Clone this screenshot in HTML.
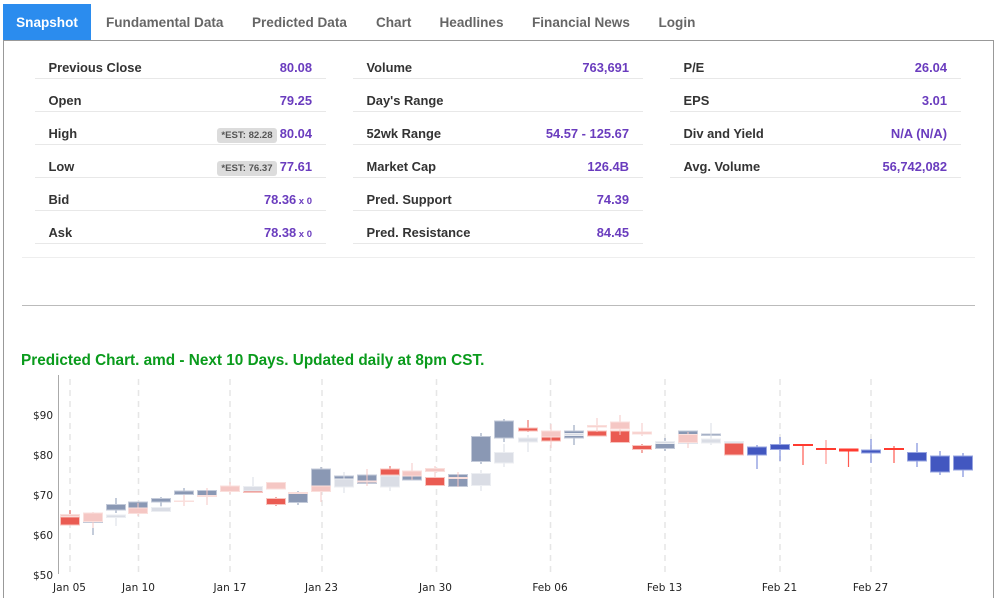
<!DOCTYPE html>
<html><head><meta charset="utf-8"><style>
html,body{margin:0;padding:0;background:#fff;width:998px;height:598px;overflow:hidden;font-family:"Liberation Sans",sans-serif}
#wrap{position:relative;width:998px;height:598px;overflow:hidden}
.tab{position:absolute;top:4px;height:36px;line-height:37px;font-size:13.55px;font-weight:bold;color:#666;white-space:nowrap}
#on{left:3px;width:88px;background:#2b8cee;color:#fff;text-align:center}
#panel{position:absolute;left:3px;top:40px;width:989px;height:558px;border:1px solid #999;border-bottom:0;box-sizing:content-box}
.row{position:absolute;height:33px;border-bottom:1px solid #e8e8e8;font-size:12.9px;font-weight:bold;color:#333;line-height:33px;box-sizing:border-box;white-space:nowrap}
.row b{position:absolute;left:13.5px;top:5px}
.row i{position:absolute;right:14px;top:5px;font-style:normal;color:#6a3cbe}
.row i small{font-size:9.5px;margin-left:-1px}
.est{position:absolute;right:49px;top:16px;width:60px;height:15px;line-height:15px;border-radius:3px;background:#dcdcdc;color:#555;font-size:9.6px;font-weight:bold;text-align:center}
.hr{position:absolute;left:22px;width:953px;height:1px}
h3{position:absolute;left:21px;top:352px;margin:0;font-size:15.33px;line-height:18px;color:#0a9b1c;white-space:nowrap}
svg{position:absolute;left:0;top:0}
text{font-family:"DejaVu Sans",sans-serif;font-size:10.5px;fill:#222}
.grid line{stroke:#e6e6e6;stroke-width:1.5;stroke-dasharray:6 5}
.s{fill:#8a98b4;stroke:#c3cad9}.s line,line.s{stroke:#8a98b4}
.r{fill:#ea5b52;stroke:#f8c4bf}line.r{stroke:#ea5b52}
.p{fill:#f5c7c4;stroke:#fadfdc}line.p{stroke:#f5c7c4}
.g{fill:#dadde5;stroke:#eceef2}line.g{stroke:#dadde5}
.b{fill:#4257c0;stroke:#97a4e0}line.b{stroke:#7f8fdb}
.t{fill:#ff3b30;stroke:none}line.t{stroke:#ff5a50}
</style></head><body><div id="wrap">
<div class="tab" id="on">Snapshot</div>
<div class="tab" style="left:106px">Fundamental Data</div>
<div class="tab" style="left:252px">Predicted Data</div>
<div class="tab" style="left:376px">Chart</div>
<div class="tab" style="left:439.5px">Headlines</div>
<div class="tab" style="left:532px">Financial News</div>
<div class="tab" style="left:658.5px">Login</div>
<div id="panel"></div>

<div class="row" style="left:35px;top:46px;width:291px"><b>Previous Close</b><i>80.08</i></div>
<div class="row" style="left:35px;top:79px;width:291px"><b>Open</b><i>79.25</i></div>
<div class="row" style="left:35px;top:112px;width:291px"><b>High</b><span class="est">*EST: 82.28</span><i>80.04</i></div>
<div class="row" style="left:35px;top:145px;width:291px"><b>Low</b><span class="est">*EST: 76.37</span><i>77.61</i></div>
<div class="row" style="left:35px;top:178px;width:291px"><b>Bid</b><i>78.36 <small>x 0</small></i></div>
<div class="row" style="left:35px;top:211px;width:291px"><b>Ask</b><i>78.38 <small>x 0</small></i></div>

<div class="row" style="left:353px;top:46px;width:290px"><b>Volume</b><i>763,691</i></div>
<div class="row" style="left:353px;top:79px;width:290px"><b>Day's Range</b></div>
<div class="row" style="left:353px;top:112px;width:290px"><b>52wk Range</b><i>54.57 - 125.67</i></div>
<div class="row" style="left:353px;top:145px;width:290px"><b>Market Cap</b><i>126.4B</i></div>
<div class="row" style="left:353px;top:178px;width:290px"><b>Pred. Support</b><i>74.39</i></div>
<div class="row" style="left:353px;top:211px;width:290px"><b>Pred. Resistance</b><i>84.45</i></div>

<div class="row" style="left:670px;top:46px;width:291px"><b>P/E</b><i>26.04</i></div>
<div class="row" style="left:670px;top:79px;width:291px"><b>EPS</b><i>3.01</i></div>
<div class="row" style="left:670px;top:112px;width:291px"><b>Div and Yield</b><i>N/A (N/A)</i></div>
<div class="row" style="left:670px;top:145px;width:291px"><b>Avg. Volume</b><i>56,742,082</i></div>

<div class="hr" style="top:257px;background:#eee"></div>
<div class="hr" style="top:305px;background:#bbb"></div>
<h3>Predicted Chart. amd - Next 10 Days. Updated daily at 8pm CST.</h3>

<svg width="998" height="598" viewBox="0 0 998 598">
<g class="grid">
<line x1="70" y1="379" x2="70" y2="575"/><line x1="138.5" y1="379" x2="138.5" y2="575"/><line x1="230" y1="379" x2="230" y2="575"/><line x1="322" y1="379" x2="322" y2="575"/><line x1="436.5" y1="379" x2="436.5" y2="575"/><line x1="550.5" y1="379" x2="550.5" y2="575"/><line x1="665" y1="379" x2="665" y2="575"/><line x1="780" y1="379" x2="780" y2="575"/><line x1="871" y1="379" x2="871" y2="575"/>
</g>
<line x1="58.5" y1="375" x2="58.5" y2="574" stroke="#aaa" stroke-width="1"/>
<text x="33" y="419">$90</text><text x="33" y="459">$80</text><text x="33" y="499">$70</text><text x="33" y="539">$60</text><text x="33" y="579">$50</text>
<g text-anchor="middle">
<text x="69.5" y="591">Jan 05</text><text x="138.5" y="591">Jan 10</text><text x="230" y="591">Jan 17</text><text x="321.5" y="591">Jan 23</text><text x="435.5" y="591">Jan 30</text><text x="550" y="591">Feb 06</text><text x="664.5" y="591">Feb 13</text><text x="779.5" y="591">Feb 21</text><text x="870.5" y="591">Feb 27</text>
</g>
<!-- dark layer wicks -->
<g stroke-width="1">
<line class="r" x1="70" y1="510" x2="70" y2="518"/>
<line class="s" x1="93" y1="522" x2="93" y2="535"/>
<line class="s" x1="116" y1="498" x2="116" y2="513"/>
<line class="s" x1="161" y1="497" x2="161" y2="506"/>
<line class="s" x1="184" y1="488" x2="184" y2="496"/>
<line class="r" x1="276" y1="497" x2="276" y2="506"/>
<line class="s" x1="298" y1="491" x2="298" y2="505"/>
<line class="s" x1="321" y1="467" x2="321" y2="486"/>
<line class="s" x1="344" y1="472" x2="344" y2="479"/>
<line class="s" x1="367" y1="472" x2="367" y2="486"/>
<line class="r" x1="390" y1="466" x2="390" y2="476"/>
<line class="s" x1="481" y1="433" x2="481" y2="464"/>
<line class="s" x1="504" y1="419" x2="504" y2="442"/>
<line class="r" x1="528" y1="420" x2="528" y2="432"/>
<line class="s" x1="574" y1="425" x2="574" y2="445"/>
<line class="r" x1="551" y1="436" x2="551" y2="442"/>
<line class="r" x1="597" y1="428" x2="597" y2="432"/>
<line class="r" x1="642" y1="444" x2="642" y2="453"/>
<line class="s" x1="665" y1="438" x2="665" y2="451"/>
<line class="s" x1="711" y1="423" x2="711" y2="436"/>
</g>
<!-- dark layer bodies -->
<rect class="r" x="60.5" y="517" width="19" height="8"/>
<rect class="s" x="83.5" y="521" width="19" height="1.5"/>
<rect class="s" x="106.5" y="504.5" width="19" height="5.5"/>
<rect class="s" x="128.5" y="502" width="19" height="6"/>
<rect class="s" x="151.5" y="498.5" width="19" height="3.5"/>
<rect class="s" x="174.5" y="491" width="19" height="3.5"/>
<rect class="s" x="197.5" y="490.5" width="19" height="5"/>
<rect class="r" x="243.5" y="491" width="19" height="1.5"/>
<rect class="r" x="266.5" y="498.5" width="19" height="6"/>
<rect class="s" x="288.5" y="493.5" width="19" height="9"/>
<rect class="s" x="311.5" y="469" width="19" height="17"/>
<rect class="s" x="334.5" y="476" width="19" height="3"/>
<rect class="s" x="357.5" y="475" width="19" height="8.5"/>
<rect class="r" x="380.5" y="469" width="19" height="6"/>
<rect class="s" x="402.5" y="476" width="19" height="4"/>
<rect class="r" x="425.5" y="477.5" width="19" height="8"/>
<rect class="s" x="448.5" y="474.5" width="19" height="12"/>
<rect class="s" x="471.5" y="436.5" width="19" height="25"/>
<rect class="s" x="494.5" y="421" width="19" height="17"/>
<rect class="r" x="518.5" y="428" width="19" height="3"/>
<rect class="r" x="541.5" y="437" width="19" height="4"/>
<rect class="s" x="564.5" y="431" width="19" height="7"/>
<rect class="r" x="587.5" y="431" width="19" height="5"/>
<rect class="r" x="610.5" y="431" width="19" height="11.5"/>
<rect class="r" x="632.5" y="445.5" width="19" height="4"/>
<rect class="s" x="655.5" y="443.5" width="19" height="5"/>
<rect class="s" x="678.5" y="431" width="19" height="12"/>
<rect class="s" x="701.5" y="434" width="19" height="1.5"/>
<rect class="r" x="724.5" y="443" width="19" height="12"/>
<!-- light layer -->
<g stroke-width="1">
<line class="p" x1="93" y1="512" x2="93" y2="528"/>
<line class="g" x1="116" y1="516" x2="116" y2="526"/>
<line class="p" x1="138" y1="503" x2="138" y2="516"/>
<line class="g" x1="161" y1="506" x2="161" y2="512"/>
<line class="p" x1="184" y1="495" x2="184" y2="506"/>
<line class="p" x1="207" y1="488" x2="207" y2="505"/>
<line class="p" x1="230" y1="482" x2="230" y2="494"/>
<line class="g" x1="253" y1="477" x2="253" y2="491"/>
<line class="p" x1="321" y1="486" x2="321" y2="502"/>
<line class="g" x1="344" y1="472" x2="344" y2="493"/>
<line class="p" x1="367" y1="469" x2="367" y2="486"/>
<line class="g" x1="390" y1="476" x2="390" y2="491"/>
<line class="p" x1="412" y1="463" x2="412" y2="480"/>
<line class="p" x1="435" y1="466" x2="435" y2="478"/>
<line class="p" x1="458" y1="472" x2="458" y2="487"/>
<line class="g" x1="481" y1="470" x2="481" y2="491"/>
<line class="g" x1="504" y1="444" x2="504" y2="467"/>
<line class="g" x1="528" y1="435" x2="528" y2="452"/>
<line class="p" x1="551" y1="424" x2="551" y2="448"/>
<line class="p" x1="597" y1="418" x2="597" y2="432"/>
<line class="p" x1="620" y1="415" x2="620" y2="435"/>
<line class="p" x1="642" y1="423" x2="642" y2="436"/>
<line class="p" x1="688" y1="432" x2="688" y2="448"/>
<line class="g" x1="711" y1="423" x2="711" y2="445"/>
</g>
<rect class="p" x="60.5" y="514.5" width="19" height="2"/>
<rect class="p" x="83.5" y="513" width="19" height="8.5"/>
<rect class="g" x="106.5" y="515" width="19" height="2.5"/>
<rect class="p" x="128.5" y="508" width="19" height="5.5"/>
<rect class="g" x="151.5" y="507.5" width="19" height="4"/>
<rect class="p" x="174.5" y="501" width="19" height="0.5"/>
<rect class="p" x="197.5" y="495.5" width="19" height="1"/>
<rect class="p" x="220.5" y="486" width="19" height="5.5"/>
<rect class="g" x="243.5" y="486.5" width="19" height="4.5"/>
<rect class="p" x="266.5" y="482.5" width="19" height="6.5"/>
<rect class="p" x="288.5" y="492.5" width="19" height="1"/>
<rect class="p" x="311.5" y="486" width="19" height="5.5"/>
<rect class="g" x="334.5" y="479" width="19" height="8"/>
<rect class="p" x="357.5" y="481" width="19" height="1"/>
<rect class="g" x="380.5" y="476" width="19" height="11"/>
<rect class="p" x="402.5" y="471" width="19" height="5"/>
<rect class="p" x="425.5" y="468.5" width="19" height="3"/>
<rect class="p" x="448.5" y="477.5" width="19" height="1"/>
<rect class="g" x="471.5" y="473.5" width="19" height="12"/>
<rect class="g" x="494.5" y="452.5" width="19" height="10.5"/>
<rect class="g" x="518.5" y="438" width="19" height="4"/>
<rect class="p" x="541.5" y="431" width="19" height="6"/>
<rect class="g" x="564.5" y="433.5" width="19" height="2"/>
<rect class="p" x="587.5" y="425.5" width="19" height="1.5"/>
<rect class="p" x="610.5" y="422" width="19" height="7"/>
<rect class="p" x="632.5" y="432" width="19" height="2"/>
<rect class="g" x="655.5" y="441.5" width="19" height="2"/>
<rect class="p" x="678.5" y="434.5" width="19" height="8"/>
<rect class="g" x="701.5" y="439" width="19" height="4"/>
<rect class="g" x="724.5" y="441.5" width="19" height="1.5"/>
<!-- forecast -->
<g stroke-width="1.2">
<line class="b" x1="757" y1="445" x2="757" y2="469"/>
<line class="b" x1="780" y1="437" x2="780" y2="461"/>
<line class="t" x1="803" y1="445" x2="803" y2="465"/>
<line class="t" x1="826" y1="440" x2="826" y2="464" style="stroke:#ff9a94"/>
<line class="t" x1="848.5" y1="449" x2="848.5" y2="467"/>
<line class="b" x1="871" y1="439" x2="871" y2="463"/>
<line class="t" x1="894" y1="446" x2="894" y2="463"/>
<line class="b" x1="917" y1="443" x2="917" y2="467"/>
<line class="b" x1="940" y1="451" x2="940" y2="475"/>
<line class="b" x1="963" y1="453" x2="963" y2="477"/>
</g>
<rect class="b" x="747.5" y="447" width="19" height="8"/>
<rect class="b" x="770.5" y="444.5" width="19" height="5"/>
<rect class="t" x="793" y="444" width="20" height="2"/>
<rect class="t" x="816" y="448" width="20" height="2"/>
<rect class="t" x="839" y="448.5" width="19.5" height="3"/>
<rect class="b" x="861.5" y="450" width="19" height="3"/>
<rect class="t" x="884" y="448" width="20" height="2"/>
<rect class="b" x="907.5" y="452.5" width="19" height="8.5"/>
<rect class="b" x="930.5" y="456" width="19" height="16"/>
<rect class="b" x="953.5" y="456" width="19" height="14"/>
</svg>
</div></body></html>
